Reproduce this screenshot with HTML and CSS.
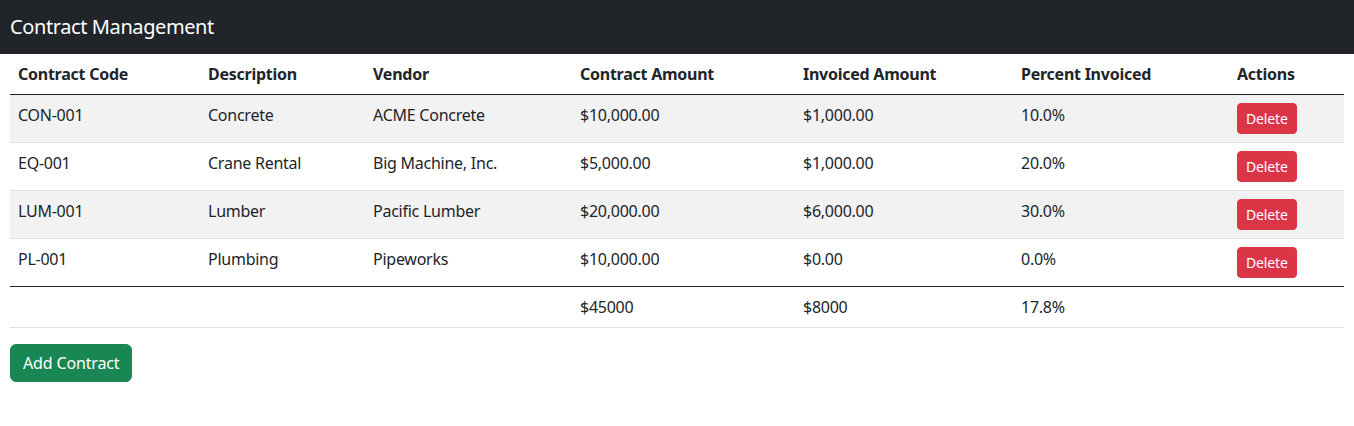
FILE: index.html
```html
<!DOCTYPE html>
<html lang="en">
<head>
<meta charset="utf-8">
<title>Contract Management</title>
<link rel="stylesheet" href="styles.css">
</head>
<body>
<nav class="navbar"><span class="brand">Contract Management</span></nav>
<main class="content">
  <table class="table">
    <colgroup>
      <col class="c1"><col class="c2"><col class="c3"><col class="c4"><col class="c5"><col class="c6"><col class="c7">
    </colgroup>
    <thead>
      <tr><th>Contract Code</th><th>Description</th><th>Vendor</th><th>Contract Amount</th><th>Invoiced Amount</th><th>Percent Invoiced</th><th>Actions</th></tr>
    </thead>
    <tbody>
      <tr class="odd"><td>CON-001</td><td>Concrete</td><td>ACME Concrete</td><td>$10,000.00</td><td>$1,000.00</td><td>10.0%</td><td><button class="btn-delete">Delete</button></td></tr>
      <tr><td>EQ-001</td><td>Crane Rental</td><td>Big Machine, Inc.</td><td>$5,000.00</td><td>$1,000.00</td><td>20.0%</td><td><button class="btn-delete">Delete</button></td></tr>
      <tr class="odd"><td>LUM-001</td><td>Lumber</td><td>Pacific Lumber</td><td>$20,000.00</td><td>$6,000.00</td><td>30.0%</td><td><button class="btn-delete">Delete</button></td></tr>
      <tr><td>PL-001</td><td>Plumbing</td><td>Pipeworks</td><td>$10,000.00</td><td>$0.00</td><td>0.0%</td><td><button class="btn-delete">Delete</button></td></tr>
    </tbody>
    <tfoot>
      <tr><td></td><td></td><td></td><td>$45000</td><td>$8000</td><td>17.8%</td><td></td></tr>
    </tfoot>
  </table>
  <button class="btn-add">Add Contract</button>
</main>
</body>
</html>
```
FILE: styles.css
```css
html, body {
  margin: 0;
  padding: 0;
  background: #fff;
  color: #212529;
  font-family: "Noto Sans", "DejaVu Sans", sans-serif;
  font-size: 16px;
  line-height: 24px;
}
.navbar {
  height: 54px;
  background: #212529;
  display: flex;
  align-items: center;
  padding: 0 10px;
}
.brand {
  color: #fff;
  font-size: 20px;
  line-height: 30px;
  letter-spacing: -0.4px;
}
.content {
  padding: 0 10px;
}
.table {
  width: 100%;
  border-collapse: collapse;
  table-layout: fixed;
  margin-bottom: 16px;
}
.c1 { width: 190px; }
.c2 { width: 165px; }
.c3 { width: 207px; }
.c4 { width: 223px; }
.c5 { width: 218px; }
.c6 { width: 216px; }
.c7 { width: auto; }
.table th, .table td {
  padding: 8px;
  text-align: left;
  vertical-align: top;
  border-bottom: 1px solid #dee2e6;
  letter-spacing: -0.25px;
}
.table th {
  font-weight: 700;
}
.table thead th {
  border-bottom: 1px solid #212529;
}
.table tbody tr:last-child td {
  border-bottom: 1px solid #212529;
}
.table tbody tr.odd td {
  background: #f2f2f2;
}
.btn-delete {
  font-family: inherit;
  font-size: 14px;
  line-height: 21px;
  padding: 4px 8px;
  border: 1px solid #dc3545;
  background: #dc3545;
  color: #fff;
  border-radius: 4px;
  letter-spacing: -0.15px;
  cursor: pointer;
}
.btn-add {
  font-family: inherit;
  font-size: 16px;
  line-height: 24px;
  padding: 6px 12px;
  border: 1px solid #198754;
  background: #198754;
  color: #fff;
  border-radius: 6px;
  letter-spacing: -0.15px;
  cursor: pointer;
}
```
